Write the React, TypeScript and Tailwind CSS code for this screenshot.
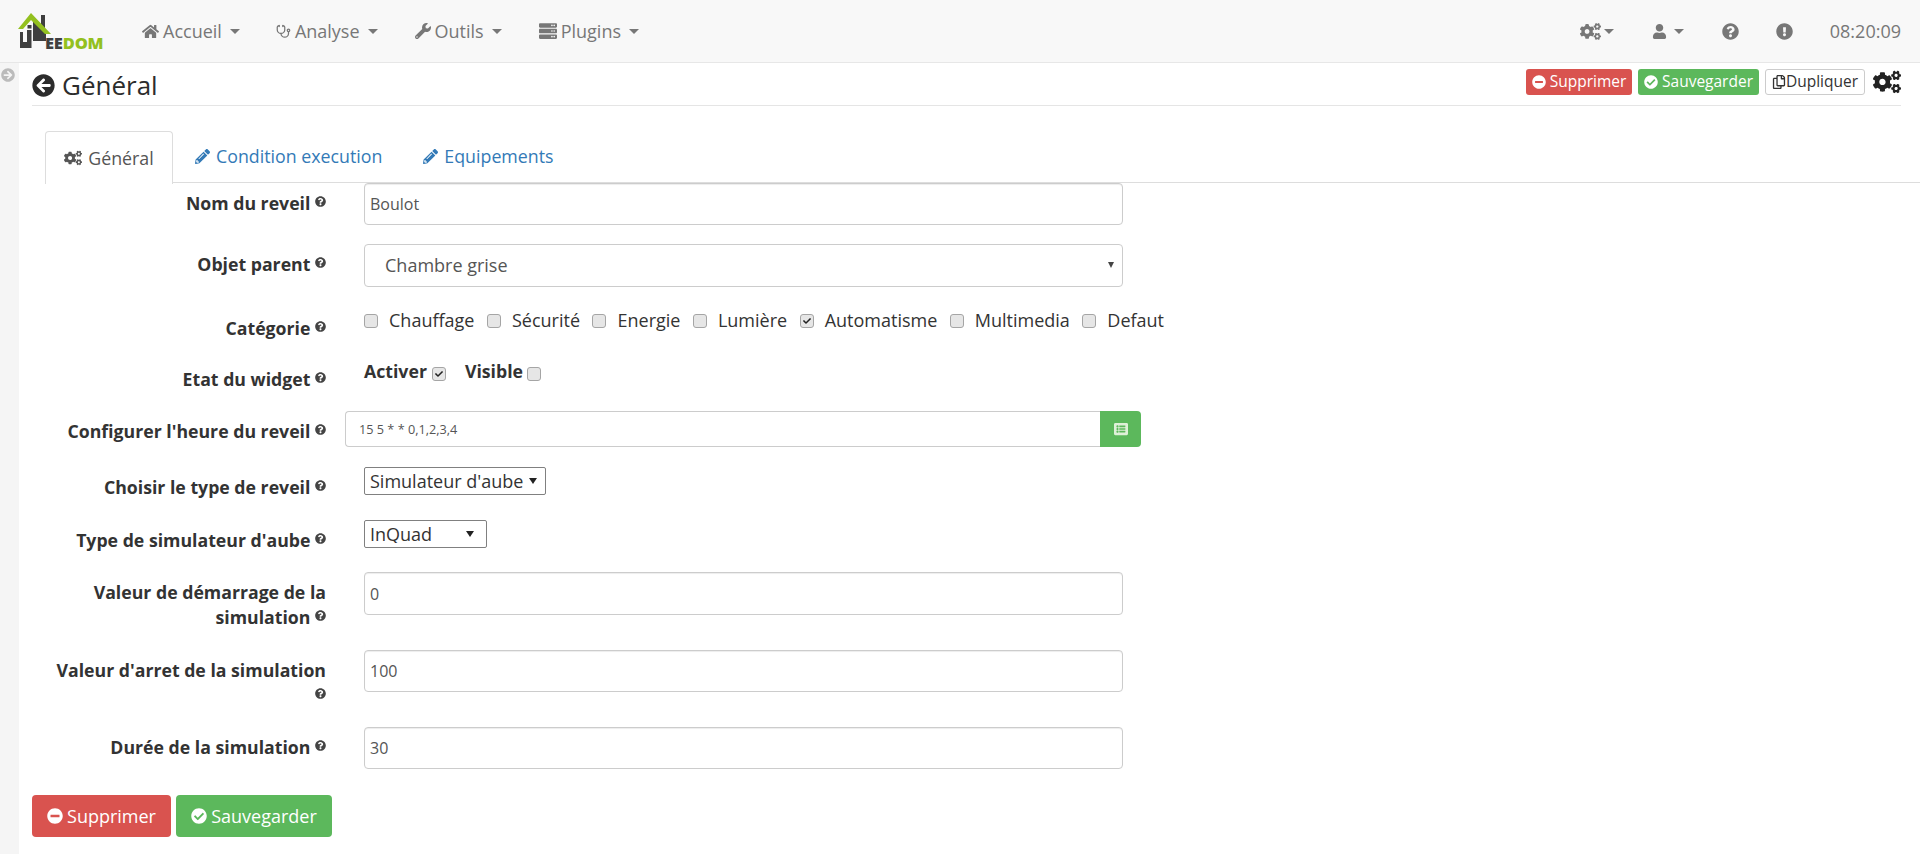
import { useState } from "react";
import {
  FaArrowCircleLeft,
  FaArrowCircleRight,
  FaCheck,
  FaCheckCircle,
  FaCogs,
  FaExclamationCircle,
  FaHome,
  FaListAlt,
  FaMinusCircle,
  FaPencilAlt,
  FaQuestionCircle,
  FaRegCopy,
  FaServer,
  FaUser,
  FaWrench,
} from "react-icons/fa";
import { Stethoscope } from "lucide-react";

function Caret({ className = "ml-2" }: { className?: string }) {
  return <span className={`inline-block h-0 w-0 border-x-[5px] border-t-[5px] border-x-transparent border-t-[#777] ${className}`} />;
}

function Logo() {
  return (
    <div className="relative h-[42px] w-[90px] shrink-0">
      <svg viewBox="0 0 90 42" className="absolute left-0 top-0 h-[42px] w-[90px]">
        <rect x="25" y="5" width="4" height="13" fill="#3f3f3f" />
        <path d="M17 11 L30 24 V31 H17 Z" fill="#3f3f3f" />
        <rect x="4" y="22" width="3" height="11" fill="#3f3f3f" />
        <path d="M4 32 H11 V20 H15.5 V38 H4 Z" fill="#3f3f3f" />
        <rect x="11.5" y="15" width="4" height="3.5" fill="#3f3f3f" />
        <path d="M2 19 L15 3 L35 24 L29 24 L15 10 L7 19 Z" fill="#93c01f" />
      </svg>
      <span className="absolute left-[29px] top-[24px] text-[16.5px] font-extrabold leading-[18px] tracking-[-0.2px]">
        <span className="text-[#3f3f3f]">EE</span>
        <span className="text-[#93c01f]">DOM</span>
      </span>
    </div>
  );
}

function NavItem({ icon, label, left }: { icon: React.ReactNode; label: string; left: string }) {
  return (
    <div className={`flex items-center text-[18px] text-[#777] ${left}`}>
      {icon}
      <span className="ml-1">{label}</span>
      <Caret />
    </div>
  );
}

function Help() {
  return <FaQuestionCircle className="inline-block align-[3px] text-[11px] text-[#444]" />;
}

function Check({ checked = false }: { checked?: boolean }) {
  return (
    <span className="inline-flex h-[14px] w-[14px] shrink-0 items-center justify-center rounded-[3px] border border-[#a5a5a5] bg-[#e6e6e6]">
      {checked && <FaCheck className="text-[8px] text-[#222]" />}
    </span>
  );
}

function Row({ label, top = "mt-[19px]", children }: { label: React.ReactNode; top?: string; children: React.ReactNode }) {
  return (
    <div className={`flex ${top}`}>
      <div className="ml-[20px] w-[274px] shrink-0 pt-[8px] text-right text-[17.7px] font-bold leading-[25px] text-[#333]">{label}</div>
      <div className="ml-[38px] min-w-0 flex-1">{children}</div>
    </div>
  );
}

function TextInput({ value, height = "h-[42px]" }: { value: string; height?: string }) {
  return (
    <input
      defaultValue={value}
      className={`block ${height} w-[759px] rounded border border-[#ccc] bg-white px-[5px] text-[16px] text-[#555] shadow-[inset_0_1px_1px_rgba(0,0,0,0.075)] outline-none`}
    />
  );
}

const categories = [
  { name: "Chauffage", checked: false },
  { name: "Sécurité", checked: false },
  { name: "Energie", checked: false },
  { name: "Lumière", checked: false },
  { name: "Automatisme", checked: true },
  { name: "Multimedia", checked: false },
  { name: "Defaut", checked: false },
];

export default function App() {
  const [tab, setTab] = useState("general");

  return (
    <div className="flex h-screen flex-col overflow-hidden bg-white font-['Open_Sans','Noto_Sans',sans-serif] text-[#333]">
      <nav className="flex h-[63px] shrink-0 items-center border-b border-[#e7e7e7] bg-[#f8f8f8] pl-[16px] pr-[19px]">
        <Logo />
        <NavItem icon={<FaHome className="text-[17px]" />} label="Accueil" left="ml-[36px]" />
        <NavItem icon={<Stethoscope size={15} />} label="Analyse" left="ml-[36px]" />
        <NavItem icon={<FaWrench className="text-[16px]" />} label="Outils" left="ml-[37px]" />
        <NavItem icon={<FaServer className="text-[18px]" />} label="Plugins" left="ml-[37px]" />
        <div className="ml-auto flex items-center text-[#777]">
          <FaCogs className="text-[21px]" />
          <Caret className="ml-[3px]" />
          <FaUser className="ml-[38px] text-[15px]" />
          <Caret className="ml-[7px]" />
          <FaQuestionCircle className="ml-[38px] text-[17px]" />
          <FaExclamationCircle className="ml-[37px] text-[17px]" />
          <span className="ml-[37px] text-[18px]">08:20:09</span>
        </div>
      </nav>

      <div className="flex min-h-0 flex-1">
        <aside className="w-[19px] shrink-0 bg-[#f5f5f5] pl-[1px] pt-[5px]">
          <FaArrowCircleRight className="text-[14px] text-[#bbb]" />
        </aside>

        <main className="min-w-0 flex-1 pl-[13px]">
          <div className="mr-[19px] flex h-[43px] items-center border-b border-[#e5e5e5]">
            <FaArrowCircleLeft className="mt-[2px] text-[23px] text-[#2c2c2c]" />
            <h1 className="ml-[7px] mt-[2px] text-[26px] leading-none text-[#2c2c2c]">Général</h1>
            <div className="ml-auto flex items-center self-start pt-[5px]">
              <button className="flex h-[26px] w-[106px] items-center justify-center rounded-[3px] bg-[#d9534f] text-[15.5px] text-white">
                <FaMinusCircle className="mr-[4px] text-[14px]" />
                Supprimer
              </button>
              <button className="ml-[6px] flex h-[26px] w-[121px] items-center justify-center rounded-[3px] bg-[#5cb85c] text-[15.5px] text-white">
                <FaCheckCircle className="mr-[4px] text-[14px]" />
                Sauvegarder
              </button>
              <button className="ml-[6px] flex h-[26px] w-[100px] items-center justify-center rounded-[3px] border border-[#ccc] bg-white text-[15.5px] text-[#333]">
                <FaRegCopy className="text-[14px]" />
                Dupliquer
              </button>
              <FaCogs className="ml-[8px] text-[28px] text-[#222]" />
            </div>
          </div>

          <div className="ml-[13px] mt-[25px] flex h-[52px] border-b border-[#ddd]">
            <button
              onClick={() => setTab("general")}
              className="-mb-px flex h-[53px] w-[128px] items-center justify-center rounded-t border border-b-0 border-[#ddd] bg-white text-[17.8px] text-[#555]"
            >
              <FaCogs className="mr-[6px] text-[18px]" />
              Général
            </button>
            <button onClick={() => setTab("condition")} className="ml-[22px] flex items-center text-[17.8px] text-[#337ab7]">
              <FaPencilAlt className="mr-[6px] text-[15px]" />
              Condition execution
            </button>
            <button onClick={() => setTab("equipements")} className="ml-[41px] flex items-center text-[17.8px] text-[#337ab7]">
              <FaPencilAlt className="mr-[6px] text-[15px]" />
              Equipements
            </button>
          </div>

          {tab && (
            <form>
              <Row label={<>Nom du reveil <Help /></>} top="mt-0">
                <TextInput value="Boulot" />
              </Row>

              <Row label={<>Objet parent <Help /></>}>
                <div className="relative w-[759px]">
                  <select className="block h-[43px] w-full appearance-none rounded border border-[#ccc] bg-white px-[20px] text-[18px] text-[#555] outline-none">
                    <option>Chambre grise</option>
                  </select>
                  <span className="absolute right-[9px] top-[18px] h-0 w-0 border-x-[3.5px] border-t-[6px] border-x-transparent border-t-[#444]" />
                </div>
              </Row>

              <Row label={<>Catégorie <Help /></>} top="mt-[21px]">
                <div className="flex h-[25px] items-center text-[18px] text-[#333]">
                  {categories.map((c) => (
                    <label key={c.name} className="mr-[12.5px] flex items-center">
                      <Check checked={c.checked} />
                      <span className="ml-[11px]">{c.name}</span>
                    </label>
                  ))}
                </div>
              </Row>

              <Row label={<>Etat du widget <Help /></>} top="mt-[18px]">
                <div className="flex h-[25px] items-center text-[17.7px] font-bold text-[#333]">
                  <span>Activer</span>
                  <span className="ml-[5px] mt-[4px] flex"><Check checked /></span>
                  <span className="ml-[19px]">Visible</span>
                  <span className="ml-[4px] mt-[4px] flex"><Check /></span>
                </div>
              </Row>

              <Row label={<>Configurer l'heure du reveil <Help /></>}>
                <div className="-ml-[19px] flex h-[36px]">
                  <input
                    defaultValue="15 5 * * 0,1,2,3,4"
                    className="h-full w-[755px] rounded-l border border-r-0 border-[#ccc] bg-white px-[13px] text-[12.7px] text-[#555] outline-none"
                  />
                  <button type="button" className="flex h-full w-[41px] items-center justify-center rounded-r bg-[#5cb85c] text-[#dff0d8]">
                    <FaListAlt className="text-[14px]" />
                  </button>
                </div>
              </Row>

              <Row label={<>Choisir le type de reveil <Help /></>} top="mt-[20px]">
                <div className="relative w-[182px]">
                  <select className="block h-[28px] w-full appearance-none rounded-[2px] border border-[#808080] bg-white px-[5px] text-[18px] leading-none text-[#333] outline-none">
                    <option>Simulateur d'aube</option>
                  </select>
                  <span className="absolute right-[9px] top-[11px] h-0 w-0 border-x-[4px] border-t-[6px] border-x-transparent border-t-[#222]" />
                </div>
              </Row>

              <Row label={<>Type de simulateur d'aube <Help /></>} top="mt-[20px]">
                <div className="relative w-[123px]">
                  <select className="block h-[28px] w-full appearance-none rounded-[2px] border border-[#808080] bg-white px-[5px] text-[18px] leading-none text-[#333] outline-none">
                    <option>InQuad</option>
                  </select>
                  <span className="absolute right-[13px] top-[11px] h-0 w-0 border-x-[4px] border-t-[6px] border-x-transparent border-t-[#222]" />
                </div>
              </Row>

              <Row label={<>Valeur de démarrage de la simulation <Help /></>} top="mt-[19px]">
                <TextInput value="0" height="h-[43px]" />
              </Row>

              <Row label={<>Valeur d'arret de la simulation <Help /></>} top="mt-[20px]">
                <TextInput value="100" />
              </Row>

              <Row label={<>Durée de la simulation <Help /></>} top="mt-[19px]">
                <TextInput value="30" />
              </Row>

              <div className="mt-[26px] flex">
                <button type="button" className="flex h-[42px] w-[139px] items-center justify-center rounded bg-[#d9534f] text-[18px] text-white">
                  <FaMinusCircle className="mr-[4px] text-[16px]" />
                  Supprimer
                </button>
                <button type="button" className="ml-[5px] flex h-[42px] w-[156px] items-center justify-center rounded bg-[#5cb85c] text-[18px] text-white">
                  <FaCheckCircle className="mr-[4px] text-[16px]" />
                  Sauvegarder
                </button>
              </div>
            </form>
          )}
        </main>
      </div>
    </div>
  );
}
